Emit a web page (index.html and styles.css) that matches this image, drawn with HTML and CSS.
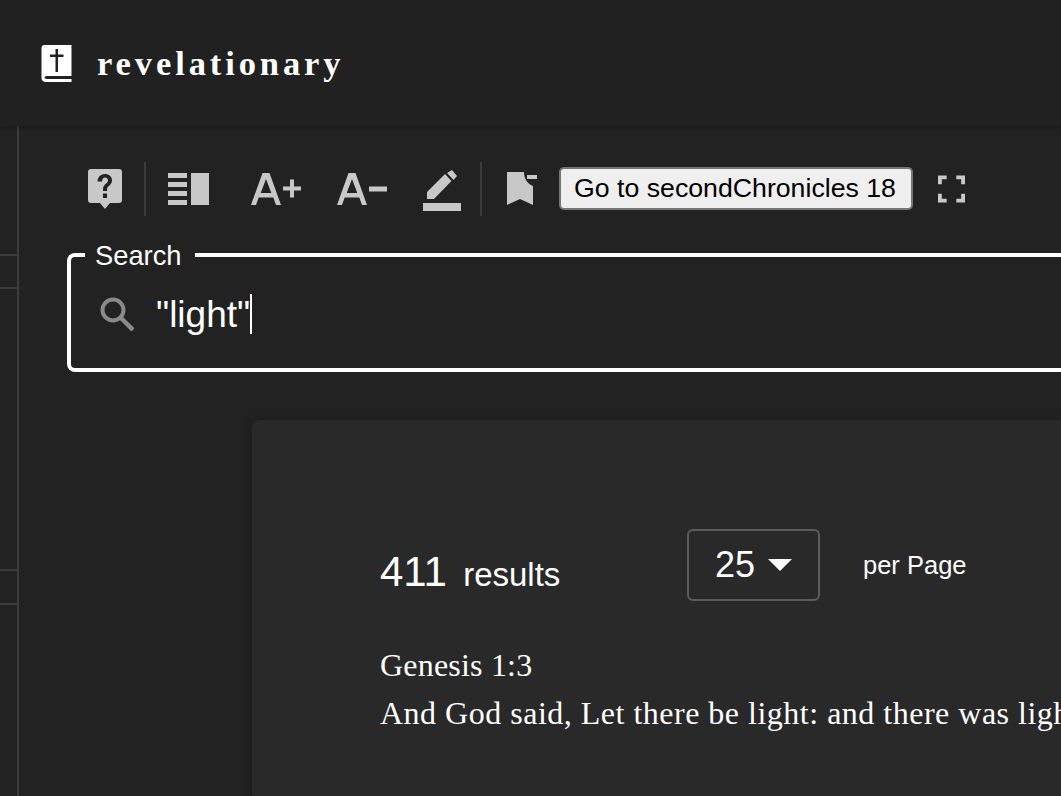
FILE: index.html
```html
<!DOCTYPE html>
<html lang="en">
<head>
    <meta charset="UTF-8">
    <title>revelationary</title>
    <link rel="stylesheet" href="styles.css">
</head>
<body>
    <header class="app-bar">
        <svg class="logo" viewBox="0 0 32 40" width="32" height="40">
            <path fill="#fff" fill-rule="evenodd" d="M3 2H30.500V33H6C4.500 33 3.500 34 3.500 34.500S4.500 36 6 36H30.500V39H5C2.500 39 .5 37.500 .5 35V5C.5 3.500 1.500 2 3 2ZM14.500 6V11.500H9V14H14.500V29H17V14H22.500V11.500H17V6Z"/>
        </svg>
        <span class="brand">revelationary</span>
    </header>
    <div class="layout">
        <aside class="sidebar">
            <div class="side-row first"></div>
            <div class="side-row second"></div>
            <div class="side-row third"></div>
            <div class="side-row"></div>
        </aside>
        <main class="content">
            <div class="toolbar">
                <svg class="tool" viewBox="0 0 36 42" width="36" height="42">
                    <path fill="#c8c8c8" fill-rule="evenodd" d="M4 1H32Q35 1 35 4V32Q35 35 32 35H23L18 41L13 35H4Q1 35 1 32V4Q1 1 4 1ZM10.500 13.500H15C15 11 16.500 9.500 18 9.500C19.500 9.500 21 10.500 21 12.500C21 15.500 16 16 16 21.500V23H20V21.500C20 18 25 17 25 12.500C25 8.500 22 6 18 6C14 6 10.500 9 10.500 13.500ZM16 25.500V30H20V25.500Z"/>
                </svg>
                <span class="divider"></span>
                <svg class="tool reader" viewBox="0 0 42 32" width="42" height="32">
                    <path fill="#c8c8c8" d="M0 0H19V5H0ZM0 9H19V14H0ZM0 18H19V23H0ZM0 27H19V32H0ZM23 0H41V32H23Z"/>
                </svg>
                <svg class="tool font-up" viewBox="0 0 52 34" width="52" height="34">
                    <path fill="#c8c8c8" fill-rule="evenodd" d="M11.500 1H18.500L30 33H25L22.300 25.500H7.700L5 33H0ZM15 7L9.700 21H20.300ZM32 14.500H39V7.500H43V14.500H50V18.500H43V25.500H39V18.500H32Z"/>
                </svg>
                <svg class="tool font-down" viewBox="0 0 52 34" width="52" height="34">
                    <path fill="#c8c8c8" fill-rule="evenodd" d="M11.500 1H18.500L30 33H25L22.300 25.500H7.700L5 33H0ZM15 7L9.700 21H20.300ZM32 14.500H50V19.500H32Z"/>
                </svg>
                <svg class="tool marker" viewBox="0 0 38 44" width="38" height="44">
                    <path fill="#c8c8c8" d="M0 36H38V44H0ZM4 25L22 7L28.500 14L11 32H4ZM24 6L29 3L34 9L30.500 13Z"/>
                </svg>
                <span class="divider second-divider"></span>
                <svg class="tool bookmark" viewBox="0 0 32 36" width="32" height="36">
                    <path fill="#c8c8c8" d="M0 1H17C17 7 20 13 26 15V34L13 28L0 34ZM20 4H30V8H20Z"/>
                </svg>
                <button class="goto" type="button">Go to secondChronicles 18</button>
                <svg class="tool fullscreen" viewBox="0 0 28 28" width="27" height="28">
                    <path fill="none" stroke="#c8c8c8" stroke-width="4" d="M9 2H2V9M19 2H26V9M9 26H2V19M19 26H26V19"/>
                </svg>
            </div>
            <div class="search">
                <span class="search-label">Search</span>
                <svg class="search-icon" viewBox="0 0 34 34" width="34" height="34">
                    <circle cx="13" cy="13" r="10.500" fill="none" stroke="#8a8a8a" stroke-width="4"/>
                    <path stroke="#8a8a8a" stroke-width="4.500" d="M21 21L33 33"/>
                </svg>
                <span class="search-text">"light"</span><span class="caret"></span>
            </div>
            <section class="results">
                <div class="results-head">
                    <div class="count"><span class="count-num">411</span> results</div>
                    <div class="page-size">25 <span class="arrow"></span></div>
                    <div class="per-page">per Page</div>
                </div>
                <div class="verse">
                    <div class="verse-ref">Genesis 1:3</div>
                    <div class="verse-text">And God said, Let there be light: and there was light.</div>
                </div>
            </section>
        </main>
    </div>
</body>
</html>
```

FILE: styles.css
```css
html, body {
    height: 100%;
}
body {
    margin: 0;
    overflow: hidden;
    background-color: #222222;
    color: #ffffff;
    font-family: "Liberation Sans", Arial, sans-serif;
}
.app-bar {
    height: 126px;
    box-sizing: border-box;
    padding-left: 41px;
    display: flex;
    align-items: center;
    background-color: #212121;
    box-shadow: 0 1px 4px rgba(0, 0, 0, 0.35);
    position: relative;
}
.logo {
    flex: none;
}
.brand {
    margin-left: 24px;
    font-family: "Liberation Serif", "Times New Roman", serif;
    font-weight: 700;
    font-size: 34.500px;
    letter-spacing: 3.900px;
}
.layout {
    display: flex;
    height: 670px;
}
.sidebar {
    width: 17px;
    flex: none;
    padding-top: 128px;
    border-right: 2px solid #3c3c3c;
}
.side-row {
    height: 31px;
    border-top: 2px solid #3c3c3c;
}
.side-row.second {
    height: 280px;
}
.side-row.third {
    height: 32px;
}
.content {
    flex: 1;
    min-width: 0;
    padding: 36px 0 0 48px;
}
.toolbar {
    display: flex;
    align-items: center;
    height: 54px;
    padding-left: 20px;
}
.tool {
    flex: none;
}
.divider {
    width: 2px;
    height: 54px;
    margin: 0 22px 0 21px;
    background-color: #3a3a3a;
}
.font-up {
    margin-left: 41px;
}
.font-down {
    margin-left: 34px;
}
.marker {
    margin-left: 34px;
}
.second-divider {
    margin-left: 19px;
    margin-right: 25px;
}
.bookmark {
    margin-right: 20px;
}
.goto {
    width: 354px;
    height: 43px;
    margin-bottom: 2px;
    padding: 0 2px 0 0;
    flex: none;
    background-color: #efefef;
    border: 2px solid #767676;
    border-radius: 5px;
    color: #000000;
    font-family: "Liberation Sans", Arial, sans-serif;
    font-size: 26.700px;
}
.fullscreen {
    margin-left: 25px;
}
.search {
    position: relative;
    display: flex;
    align-items: center;
    height: 119px;
    margin-top: 37px;
    box-sizing: border-box;
    padding: 3px 0 0 29px;
    border: 4px solid #ffffff;
    border-right: 0;
    border-radius: 8px 0 0 8px;
}
.search-label {
    position: absolute;
    top: -16px;
    left: 14px;
    padding: 0 13px 0 10px;
    background-color: #222222;
    font-size: 27.300px;
    line-height: 30px;
}
.search-icon {
    flex: none;
    margin-right: 22px;
}
.search-text {
    padding-top: 2px;
    font-size: 37px;
}
.caret {
    width: 2px;
    height: 40px;
    background-color: #ffffff;
}
.results {
    box-sizing: border-box;
    margin: 48px 0 0 185px;
    height: 376px;
    padding: 109px 0 0 128px;
    background-color: #292929;
    border-radius: 8px 0 0 0;
    box-shadow: 0 0 8px rgba(0, 0, 0, 0.25);
}
.results-head {
    display: flex;
    align-items: center;
    height: 72px;
}
.count {
    width: 307px;
    font-size: 33px;
    padding-top: 14px;
}
.count-num {
    font-size: 42px;
    margin-right: 7px;
}
.page-size {
    box-sizing: border-box;
    width: 133px;
    height: 72px;
    display: flex;
    align-items: center;
    gap: 13px;
    padding-left: 26px;
    border: 2px solid #5c5c5c;
    border-radius: 6px;
    font-size: 36px;
}
.arrow {
    width: 0;
    height: 0;
    border-left: 12px solid transparent;
    border-right: 12px solid transparent;
    border-top: 12px solid #ffffff;
}
.per-page {
    margin-left: 43px;
    font-size: 25.500px;
}
.verse {
    margin-top: 40px;
    font-family: "Liberation Serif", "Times New Roman", serif;
    font-size: 32px;
    line-height: 48px;
    white-space: nowrap;
}
.verse-ref {
    letter-spacing: 0.200px;
}
.verse-text {
    letter-spacing: 0.500px;
}
```
